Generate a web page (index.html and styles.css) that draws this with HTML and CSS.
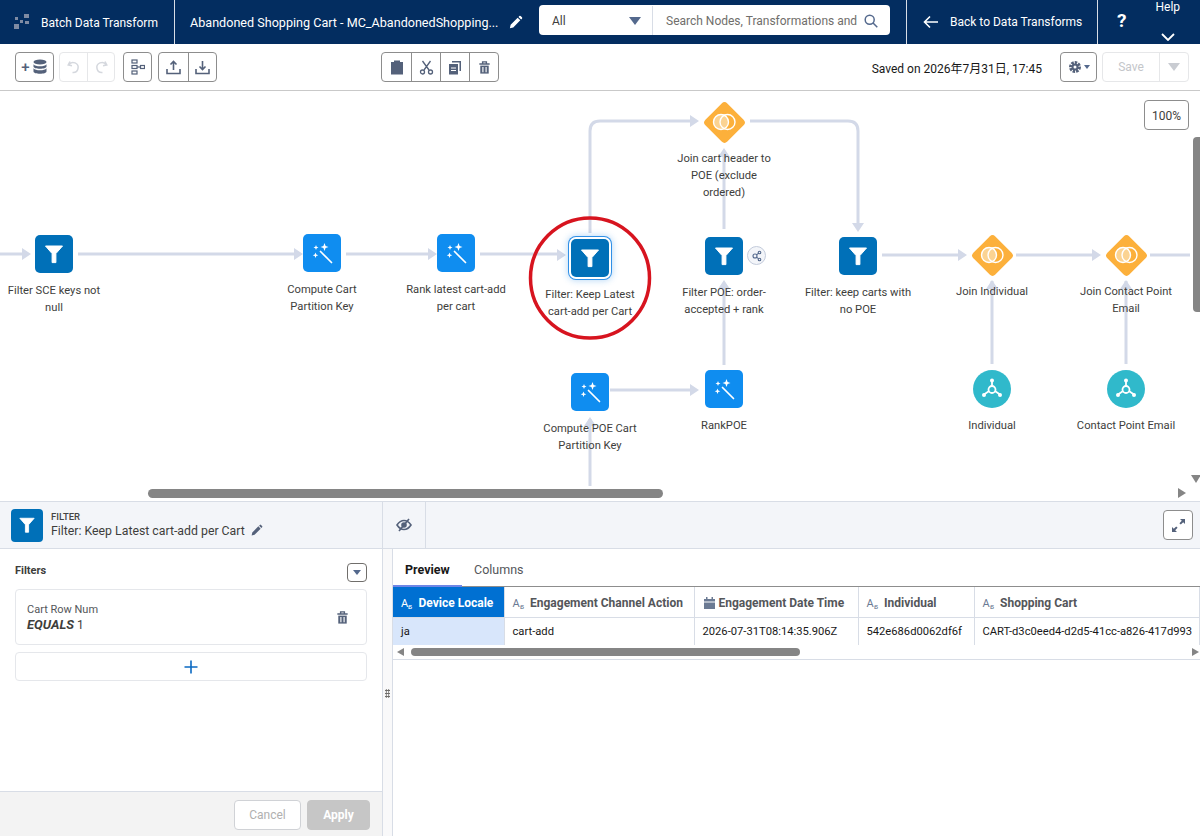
FILE: index.html
```html
<!DOCTYPE html>
<html lang="en">
<head>
  <meta charset="UTF-8">
  <title>Batch Data Transform</title>
  <link rel="stylesheet" href="styles.css">
</head>
<body>
  <svg class="defs" width="0" height="0">
    <symbol id="i-filter" viewBox="0 0 38 38">
      <path d="M10.5 11h17l-6.6 7.6v9h-3.8v-9z" fill="#fff" stroke="#fff" stroke-width="1" stroke-linejoin="round"/>
    </symbol>
    <symbol id="i-wand" viewBox="0 0 38 38">
      <path d="M17.5 17.5l11 11" stroke="#fff" stroke-width="1.700" stroke-linecap="round"/>
      <path d="M21.5 9l1.100 2.900 2.900 1.100-2.900 1.100-1.100 2.900-1.100-2.900-2.900-1.100 2.900-1.100zM13 11l.7 1.800 1.800.7-1.800.7-.7 1.800-.7-1.800-1.800-.7 1.800-.7zM12.500 18.500l.8 2 2 .8-2 .8-.8 2-.8-2-2-.8 2-.8z" fill="#fff"/>
    </symbol>
    <symbol id="i-join" viewBox="0 0 44 44">
      <circle cx="19" cy="22" r="7.500" fill="#fbe3b8" fill-opacity=".7" stroke="#fff" stroke-width="1.400"/>
      <circle cx="25.500" cy="22" r="7.500" fill="none" stroke="#fff" stroke-width="1.400"/>
    </symbol>
    <symbol id="i-hub" viewBox="0 0 38 38">
      <path d="M19 9v10M19 19l-8 5.500M19 19l8 5.500" stroke="#fff" stroke-width="1.800"/>
      <circle cx="19" cy="19.500" r="3.500" fill="#30b9cb" stroke="#fff" stroke-width="1.800"/>
      <circle cx="19" cy="10.500" r="2" fill="#fff"/>
      <circle cx="11" cy="25" r="2" fill="#fff"/>
      <circle cx="27" cy="25" r="2" fill="#fff"/>
    </symbol>
    <symbol id="i-trash" viewBox="0 0 16 16">
      <path d="M2.500 4.200h11M6 4V2h4v2" fill="none" stroke="currentColor" stroke-width="1.500"/>
      <path d="M3.500 6h9v8.500h-9z" fill="currentColor"/>
      <path d="M6.300 7.500v5.500M9.700 7.500v5.500" stroke="#fff" stroke-width="1.200"/>
    </symbol>
    <symbol id="i-pencil" viewBox="0 0 16 16">
      <path d="M2 14l.8-3.600 7.500-7.500 2.800 2.800-7.500 7.500zM11.200 2l.9-.9a1 1 0 0 1 1.400 0l1.400 1.400a1 1 0 0 1 0 1.400l-.9.9z" fill="currentColor"/>
    </symbol>
  </svg>

  <header class="topbar">
    <div class="brand">
      <svg class="brand-logo" width="16" height="16" viewBox="0 0 16 16" fill="#7f8ba3">
        <rect x="0" y="10" width="5" height="5"/><rect x="10" y="0" width="5" height="4"/>
        <rect x="1" y="3" width="3" height="3"/><rect x="6" y="6" width="3" height="3"/><rect x="11" y="7" width="4" height="3"/>
      </svg>
      <span>Batch Data Transform</span>
    </div>
    <div class="doc-title">
      <span>Abandoned Shopping Cart - MC_AbandonedShopping...</span>
      <svg width="15" height="15"><use href="#i-pencil"/></svg>
    </div>
    <div class="search-group">
      <div class="search-select"><span>All</span><i class="caret"></i></div>
      <div class="search-box">
        <span>Search Nodes, Transformations and</span>
        <svg width="14" height="14" viewBox="0 0 14 14" fill="none" stroke="#54698d" stroke-width="1.500"><circle cx="5.700" cy="5.700" r="4.500"/><path d="M9 9l4.300 4.300"/></svg>
      </div>
    </div>
    <div class="back-link">
      <svg width="16" height="14" viewBox="0 0 16 14" fill="none" stroke="#fff" stroke-width="1.600"><path d="M15 7H1.500M7 1.500L1.500 7 7 12.500"/></svg>
      <span>Back to Data Transforms</span>
    </div>
    <div class="help-cell">
      <span class="help-mark">?</span>
      <div class="help-menu">
        <span>Help</span>
        <svg width="14" height="8" viewBox="0 0 14 8" fill="none" stroke="#fff" stroke-width="1.800"><path d="M1 1l6 6 6-6"/></svg>
      </div>
    </div>
  </header>

  <div class="toolbar">
    <div class="tool-left">
      <div class="btn-group">
        <button class="tool tool-add">
          <span class="plus">+</span>
          <svg width="16" height="16" viewBox="0 0 16 16" fill="#54617a"><ellipse cx="8" cy="3" rx="6.500" ry="2.500"/><path d="M1.500 5.200c1 1.400 3.500 2 6.500 2s5.500-.6 6.500-2v2.300c0 1.300-3 2.300-6.500 2.300s-6.500-1-6.500-2.300zM1.500 9.200c1 1.400 3.500 2 6.500 2s5.500-.6 6.500-2v3.300c0 1.300-3 2.300-6.500 2.300s-6.500-1-6.500-2.300z"/></svg>
        </button>
      </div>
      <div class="btn-group off history">
        <button class="tool"><svg width="14" height="14" viewBox="0 0 14 14" fill="none" stroke="#d5d8de" stroke-width="1.500"><path d="M3 1.500L1.200 5 5 5.700M1.800 5a5 5 0 1 1 3.700 7.500"/></svg></button>
        <button class="tool"><svg width="14" height="14" viewBox="0 0 14 14" fill="none" stroke="#d5d8de" stroke-width="1.500"><path d="M11 1.500L12.800 5 9 5.700M12.200 5a5 5 0 1 0-3.700 7.500"/></svg></button>
      </div>
      <div class="btn-group tree">
        <button class="tool"><svg width="14" height="16" viewBox="0 0 14 16" fill="none" stroke="#54617a" stroke-width="1.200"><rect x="1" y="1" width="5" height="3"/><rect x="1" y="6.500" width="5" height="3"/><rect x="1" y="12" width="5" height="3"/><rect x="9.500" y="6.500" width="4" height="3"/><path d="M6 8h3.500"/></svg></button>
      </div>
      <div class="btn-group transfer">
        <button class="tool"><svg width="15" height="15" viewBox="0 0 15 15" fill="none" stroke="#54617a" stroke-width="1.600"><path d="M7.500 10V2M4.500 4.500l3-3 3 3M1 9v4.500h13V9"/></svg></button>
        <button class="tool"><svg width="15" height="15" viewBox="0 0 15 15" fill="none" stroke="#54617a" stroke-width="1.600"><path d="M7.500 1v8M4.500 6.500l3 3 3-3M1 9v4.500h13V9"/></svg></button>
      </div>
    </div>
    <div class="btn-group">
      <button class="tool"><svg width="14" height="16" viewBox="0 0 14 16" fill="#54617a"><path d="M1 3h3V1.500h6V3h3v12.500H1z"/></svg></button>
      <button class="tool"><svg width="15" height="15" viewBox="0 0 15 15" fill="none" stroke="#54617a" stroke-width="1.300"><path d="M3.500 1l6.500 9M11.500 1L5 10"/><circle cx="3.500" cy="12" r="2"/><circle cx="11.500" cy="12" r="2"/></svg></button>
      <button class="tool"><svg width="14" height="15" viewBox="0 0 14 15" fill="#54617a"><path d="M4 1h9v10h-1.500V2.500H4z"/><path d="M1 4h9v10.500H1z"/><path d="M3 8h5M3 10.500h5" stroke="#fff"/></svg></button>
      <button class="tool"><svg class="trash" width="15" height="15"><use href="#i-trash"/></svg></button>
    </div>
    <div class="tool-right">
      <span class="saved">Saved on 2026年7月31日, 17:45</span>
      <button class="tool gear">
        <svg width="14" height="14" viewBox="0 0 14 14"><circle cx="7" cy="7" r="4.500" fill="none" stroke="#54617a" stroke-width="3" stroke-dasharray="2.400 1"/><circle cx="7" cy="7" r="3.500" fill="#54617a"/><circle cx="7" cy="7" r="1.500" fill="#fff"/></svg>
        <i class="caret tiny"></i>
      </button>
      <div class="btn-group off save-group">
        <button class="tool save">Save</button>
        <button class="tool save-more"><i class="caret light"></i></button>
      </div>
    </div>
  </div>

  <main class="canvas">
    <svg class="edges" width="1200" height="410" fill="none" stroke="#d3d9e8" stroke-width="3">
      <path d="M0 163H24M78 163H296M346 163H430M480 163H559"/>
      <path d="M590 142V40Q590 30 600 30H692"/>
      <path d="M750 30H848Q858 30 858 40V134"/>
      <path d="M724 138V60M724 274V192M610 299H692M590 395V328"/>
      <path d="M882 164H960M1016 164H1094M1150 164H1190M992 273V190M1126 273V190"/>
      <g fill="#d3d9e8" stroke="none">
        <path d="M22 157l9 6-9 6zM294 157l9 6-9 6zM428 157l9 6-9 6zM557 158l9 6-9 6zM690 24l9 6-9 6zM852 132l6 9 6-9zM718 66l6-9 6 9zM718 198l6-9 6 9zM690 293l9 6-9 6zM584 335l6-9 6 9zM958 158l9 6-9 6zM1092 158l9 6-9 6zM986 198l6-9 6 9zM1120 198l6-9 6 9z"/>
      </g>
    </svg>

    <div class="node n-sce"><div class="ico filter"><svg width="38" height="38"><use href="#i-filter"/></svg></div><p>Filter SCE keys not<br>null</p></div>
    <div class="node n-compute"><div class="ico wand"><svg width="38" height="38"><use href="#i-wand"/></svg></div><p>Compute Cart<br>Partition Key</p></div>
    <div class="node n-rank"><div class="ico wand"><svg width="38" height="38"><use href="#i-wand"/></svg></div><p>Rank latest cart-add<br>per cart</p></div>
    <div class="node n-keep"><div class="ico filter selected"><svg width="38" height="38"><use href="#i-filter"/></svg></div><p>Filter: Keep Latest<br>cart-add per Cart</p></div>
    <div class="node n-fpoe"><div class="ico filter"><svg width="38" height="38"><use href="#i-filter"/></svg></div><p>Filter POE: order-<br>accepted + rank</p></div>
    <div class="node n-carts"><div class="ico filter"><svg width="38" height="38"><use href="#i-filter"/></svg></div><p>Filter: keep carts with<br>no POE</p></div>
    <div class="node n-jcart"><div class="ico join"><svg width="44" height="44"><use href="#i-join"/></svg></div><p>Join cart header to<br>POE (exclude<br>ordered)</p></div>
    <div class="node n-jind"><div class="ico join"><svg width="44" height="44"><use href="#i-join"/></svg></div><p>Join Individual</p></div>
    <div class="node n-jcon"><div class="ico join"><svg width="44" height="44"><use href="#i-join"/></svg></div><p>Join Contact Point<br>Email</p></div>
    <div class="node n-cpoe"><div class="ico wand bright"><svg width="38" height="38"><use href="#i-wand"/></svg></div><p>Compute POE Cart<br>Partition Key</p></div>
    <div class="node n-rpoe"><div class="ico wand bright"><svg width="38" height="38"><use href="#i-wand"/></svg></div><p>RankPOE</p></div>
    <div class="node n-ind"><div class="ico hub"><svg width="38" height="38"><use href="#i-hub"/></svg></div><p>Individual</p></div>
    <div class="node n-con"><div class="ico hub"><svg width="38" height="38"><use href="#i-hub"/></svg></div><p>Contact Point Email</p></div>

    <div class="badge"><svg width="12" height="12" viewBox="0 0 12 12" fill="none" stroke="#54698d" stroke-width="1.100"><circle cx="4" cy="6" r="2"/><circle cx="8.500" cy="2.500" r="1.300"/><circle cx="8.500" cy="9.500" r="1.300"/><path d="M5.500 4.700l2-1.300M5.500 7.300l2 1.300"/></svg></div>
    <svg class="ring" width="126" height="126"><ellipse cx="63" cy="63" rx="59.500" ry="60" fill="none" stroke="#d7141f" stroke-width="3.500"/></svg>
    <div class="zoom-level">100%</div>
    <div class="sb-h"></div>
    <div class="sb-v"></div>
    <i class="arrow arrow-right"></i>
    <i class="arrow arrow-down"></i>
  </main>

  <section class="panel">
    <div class="panel-head">
      <div class="head-left">
        <div class="head-ico"><svg width="32" height="32" viewBox="0 0 38 38"><use href="#i-filter"/></svg></div>
        <div>
          <div class="head-kind">FILTER</div>
          <div class="head-name">Filter: Keep Latest cart-add per Cart <svg width="13" height="13"><use href="#i-pencil"/></svg></div>
        </div>
      </div>
      <div class="head-eye">
        <svg width="16" height="14" viewBox="0 0 16 14" fill="none" stroke="#54617a" stroke-width="1.600"><path d="M1 7c2-3 4.300-4.500 7-4.500S13 4 15 7c-2 3-4.300 4.500-7 4.500S3 10 1 7z"/><circle cx="8" cy="7" r="2" fill="#54617a"/><path d="M13 1L3 13"/></svg>
      </div>
      <div class="head-rest">
        <button class="expand"><svg width="13" height="13" viewBox="0 0 13 13" fill="#54617a"><path d="M8 0h5v5l-1.800-1.800-2.400 2.400-1.400-1.400 2.400-2.400zM5 13H0V8l1.800 1.800 2.400-2.400 1.400 1.400-2.400 2.400z"/></svg></button>
      </div>
    </div>
    <div class="panel-body">
      <aside class="filters">
        <div class="filters-main">
          <div class="filters-title"><strong>Filters</strong><button class="mini"><i class="caret"></i></button></div>
          <div class="filter-card">
            <div>
              <div class="f-field">Cart Row Num</div>
              <div class="f-rule"><b>EQUALS</b> 1</div>
            </div>
            <svg class="trash" width="15" height="15"><use href="#i-trash"/></svg>
          </div>
          <div class="filter-add"><svg width="14" height="14" viewBox="0 0 14 14" stroke="#0b69c2" stroke-width="1.600"><path d="M7 .5v13M.5 7h13"/></svg></div>
        </div>
        <div class="filters-foot">
          <button class="foot-btn">Cancel</button>
          <button class="foot-btn apply">Apply</button>
        </div>
      </aside>
      <div class="splitter"><i></i></div>
      <div class="preview">
        <div class="tabs">
          <span class="tab active">Preview</span>
          <span class="tab">Columns</span>
        </div>
        <table class="grid">
          <colgroup><col class="c1"><col class="c2"><col class="c3"><col class="c4"><col class="c5"></colgroup>
          <thead>
            <tr>
              <th class="hot"><span class="ty">A<i>a</i></span> Device Locale</th>
              <th><span class="ty">A<i>a</i></span> Engagement Channel Action</th>
              <th><svg width="13" height="12" viewBox="0 0 13 12" fill="#6b7a93"><path d="M1 2h11v2.500H1zM1 5.500h11V12H1zM3 0h1.500v2H3zM8.500 0H10v2H8.500z"/></svg> Engagement Date Time</th>
              <th><span class="ty">A<i>a</i></span> Individual</th>
              <th><span class="ty">A<i>a</i></span> Shopping Cart</th>
            </tr>
          </thead>
          <tbody>
            <tr>
              <td class="hot-cell">ja</td>
              <td>cart-add</td>
              <td>2026-07-31T08:14:35.906Z</td>
              <td>542e686d0062df6f</td>
              <td>CART-d3c0eed4-d2d5-41cc-a826-417d993</td>
            </tr>
          </tbody>
        </table>
        <div class="grid-scroll">
          <i class="arrow arrow-left"></i>
          <div class="grid-thumb"></div>
          <i class="arrow arrow-right-sm"></i>
        </div>
      </div>
    </div>
  </section>
</body>
</html>
```

FILE: styles.css
```css
* {
  box-sizing: border-box;
}
html, body {
  margin: 0;
  height: 836px;
  overflow: hidden;
}
body {
  font-family: Roboto, "Noto Sans CJK JP", sans-serif;
  font-size: 12px;
  color: #3e3e3c;
  background: #fff;
}
.defs {
  position: absolute;
}
button {
  font-family: inherit;
  padding: 0;
  background: #fff;
  border: none;
}
.caret {
  display: block;
  width: 0;
  height: 0;
  border-left: 6px solid transparent;
  border-right: 6px solid transparent;
  border-top: 8px solid #54698d;
}

/* top bar */
.topbar {
  display: flex;
  height: 44px;
  background: #032d60;
  color: #fff;
}
.brand {
  display: flex;
  align-items: center;
  gap: 11px;
  width: 175px;
  padding-left: 14px;
  border-right: 1px solid #d8dde6;
}
.brand span {
  padding-top: 2px;
}
.doc-title {
  display: flex;
  align-items: center;
  gap: 10px;
  width: 364px;
  padding-left: 15px;
  font-size: 12.600px;
  white-space: nowrap;
}
.search-group {
  display: flex;
  width: 351px;
  height: 30px;
  margin-top: 5px;
  padding-top: 1px;
  background: #fff;
  border-radius: 4px;
  color: #3e3e3c;
}
.search-select {
  display: flex;
  flex: none;
  align-items: center;
  justify-content: space-between;
  width: 114px;
  padding: 0 11px 0 13px;
  border-right: 1px solid #d8dde6;
}
.search-box {
  display: flex;
  align-items: center;
  justify-content: space-between;
  flex: 1;
  min-width: 0;
  padding: 0 12px 0 13px;
  color: #706e6b;
  white-space: nowrap;
}
.back-link {
  display: flex;
  align-items: center;
  gap: 11px;
  width: 192px;
  margin-left: 16px;
  padding-left: 16px;
  border-left: 1px solid #d8dde6;
  border-right: 1px solid #d8dde6;
}
.help-cell {
  display: flex;
  flex: 1;
  padding-left: 19px;
}
.help-mark {
  margin-top: 9px;
  font-size: 19px;
  font-weight: 700;
}
.help-menu {
  display: flex;
  flex-direction: column;
  align-items: center;
  gap: 19px;
  margin-left: 29px;
}

/* toolbar */
.toolbar {
  display: flex;
  align-items: center;
  height: 47px;
  padding: 0 11px 0 15px;
  border-bottom: 1px solid #c9c9c9;
}
.tool-left {
  display: flex;
  gap: 5px;
  width: 366px;
}
.btn-group {
  display: flex;
  height: 30px;
  border: 1px solid #8d8d8d;
  border-radius: 4px;
}
.btn-group.off {
  border-color: #e6e7e9;
}
.tool {
  display: flex;
  align-items: center;
  justify-content: center;
  width: 29px;
  height: 100%;
  border-left: 1px solid #8d8d8d;
  background: transparent;
}
.tool:first-child {
  border-left: none;
}
.off .tool {
  border-color: #e6e7e9;
}
.tool-add {
  width: 37px;
  gap: 2px;
}
.history .tool, .tree .tool {
  width: 27px;
}
.tree {
  margin-left: 3px;
}
.transfer {
  margin-left: 1px;
}
.transfer .tool {
  width: 28.500px;
}
.plus {
  color: #54617a;
  font-size: 15px;
  font-weight: 500;
  line-height: 1;
}
.trash {
  color: #54617a;
}
.tool-right {
  display: flex;
  align-items: center;
  margin-left: auto;
}
.saved {
  margin-right: 18px;
  color: #181818;
}
.tool.gear {
  width: 37px;
  height: 30px;
  gap: 2px;
  border: 1px solid #8d8d8d;
  border-radius: 4px;
}
.caret.tiny {
  border-left-width: 3px;
  border-right-width: 3px;
  border-top-width: 4px;
}
.caret.light {
  border-top-color: #c9ccd2;
}
.save-group {
  margin-left: 5px;
}
.tool.save {
  width: 56px;
  font-size: 12px;
  color: #c4c6ca;
}
.tool.save-more {
  width: 29px;
}

/* canvas */
.canvas {
  position: relative;
  height: 410px;
  overflow: hidden;
}
.edges {
  position: absolute;
  left: 0;
  top: 0;
}
.node {
  position: absolute;
  display: flex;
  flex-direction: column;
  align-items: center;
  width: 140px;
  text-align: center;
}
.node p {
  margin: 9px 0 0;
  font-size: 11.200px;
  line-height: 17px;
  color: #3e3e3c;
  white-space: nowrap;
}
.ico {
  display: flex;
  align-items: center;
  justify-content: center;
  width: 38px;
  height: 38px;
  border-radius: 5px;
}
.ico svg {
  display: block;
  flex: none;
}
.ico.filter {
  background: #0070b8;
}
.ico.wand {
  background: #0f8df0;
}
.ico.hub {
  background: #30b9cb;
  border-radius: 50%;
}
.ico.join {
  position: relative;
  width: 44px;
  height: 44px;
  background: none;
}
.ico.join::before {
  content: "";
  position: absolute;
  left: 6.500px;
  top: 6.500px;
  width: 31px;
  height: 31px;
  background: #fcb03b;
  border-radius: 4px;
  transform: rotate(45deg);
}
.ico.join svg {
  position: relative;
}
.node .join + p {
  margin-top: 6px;
}
.ico.selected {
  box-shadow: 0 0 0 2px #fff, 0 0 0 3px #2f8fe6, 0 0 6px 4px rgba(47, 143, 230, .3);
}
.n-sce { left: -16px; top: 144px; }
.n-compute { left: 252px; top: 143px; }
.n-rank { left: 386px; top: 143px; }
.n-keep { left: 520px; top: 148px; }
.n-fpoe { left: 654px; top: 146px; }
.n-carts { left: 788px; top: 146px; }
.n-jcart { left: 654px; top: 9px; }
.n-jind { left: 922px; top: 142px; }
.n-jcon { left: 1056px; top: 142px; }
.n-cpoe { left: 520px; top: 282px; }
.n-rpoe { left: 654px; top: 279px; }
.n-ind { left: 922px; top: 279px; }
.n-con { left: 1056px; top: 279px; }
.badge {
  position: absolute;
  left: 747px;
  top: 155px;
  display: flex;
  align-items: center;
  justify-content: center;
  width: 19px;
  height: 19px;
  background: #f3f5f9;
  border: 1px solid #c3cbdb;
  border-radius: 50%;
}
.ring {
  position: absolute;
  left: 527px;
  top: 124px;
}
.zoom-level {
  position: absolute;
  right: 11px;
  top: 9px;
  width: 45px;
  height: 30px;
  line-height: 31px;
  text-align: center;
  background: #fff;
  border: 1px solid #8d8d8d;
  border-radius: 4px;
}
.sb-h {
  position: absolute;
  left: 148px;
  top: 398px;
  width: 515px;
  height: 9px;
  background: #858585;
  border-radius: 5px;
}
.sb-v {
  position: absolute;
  right: 0;
  top: 46px;
  width: 7px;
  height: 175px;
  background: #858585;
  border-radius: 4px 0 0 4px;
}
.arrow {
  display: block;
  width: 0;
  height: 0;
}
.canvas .arrow {
  position: absolute;
}
.arrow-right {
  left: 1178px;
  top: 397px;
  border-top: 5px solid transparent;
  border-bottom: 5px solid transparent;
  border-left: 8px solid #858585;
}
.arrow-down {
  left: 1191px;
  top: 384px;
  border-left: 5px solid transparent;
  border-right: 5px solid transparent;
  border-top: 8px solid #858585;
}

/* bottom panel */
.panel {
  border-top: 1px solid #d8dde6;
}
.panel-head {
  display: flex;
  height: 47px;
  background: #f3f5f9;
  border-bottom: 1px solid #d8dde6;
}
.head-left {
  display: flex;
  align-items: center;
  gap: 8px;
  width: 383px;
  padding-left: 11px;
  border-right: 1px solid #d8dde6;
}
.head-ico {
  width: 32px;
  height: 33px;
  background: #0070b8;
  border-radius: 4px;
}
.head-kind {
  font-size: 9.500px;
  font-weight: 500;
  line-height: 12px;
  color: #444;
}
.head-name {
  font-size: 12.300px;
  line-height: 16px;
}
.head-name svg {
  color: #54617a;
  vertical-align: -2px;
  margin-left: 2px;
}
.head-eye {
  display: flex;
  align-items: center;
  justify-content: center;
  width: 43px;
  border-right: 1px solid #d8dde6;
}
.head-rest {
  display: flex;
  align-items: center;
  justify-content: flex-end;
  flex: 1;
  padding-right: 7px;
}
.expand {
  display: flex;
  align-items: center;
  justify-content: center;
  width: 30px;
  height: 30px;
  border: 1px solid #8d8d8d;
  border-radius: 4px;
}
.panel-body {
  display: flex;
  height: 288px;
}
.filters {
  display: flex;
  flex-direction: column;
  width: 383px;
  border-right: 1px solid #d8dde6;
}
.filters-main {
  flex: 1;
  padding: 13px 15px 0;
}
.filters-title {
  display: flex;
  align-items: center;
  justify-content: space-between;
  height: 20px;
  margin-bottom: 7px;
  font-size: 11px;
}
.filters-title strong {
  margin-bottom: 3px;
  font-weight: 700;
}
.mini {
  display: flex;
  align-items: center;
  justify-content: center;
  width: 20px;
  height: 19px;
  border: 1px solid #706e6b;
  border-radius: 4px;
}
.mini .caret {
  border-left-width: 4px;
  border-right-width: 4px;
  border-top-width: 5px;
}
.filter-card {
  display: flex;
  align-items: center;
  justify-content: space-between;
  height: 56px;
  padding: 0 16px 0 11px;
  border: 1px solid #e5e7eb;
  border-radius: 4px;
}
.f-field {
  font-size: 11px;
  line-height: 15px;
  color: #54565a;
}
.f-rule {
  line-height: 16px;
}
.f-rule b {
  font-size: 13px;
  font-style: italic;
}
.filter-add {
  display: flex;
  align-items: center;
  justify-content: center;
  height: 29px;
  margin-top: 7px;
  border: 1px solid #e5e7eb;
  border-radius: 4px;
}
.filters-foot {
  display: flex;
  justify-content: flex-end;
  gap: 6px;
  height: 46px;
  padding: 8px 12px 0;
  background: #f3f3f3;
  border-top: 1px solid #d8dde6;
}
.foot-btn {
  width: 67px;
  height: 30px;
  font-size: 12px;
  color: #b0b0b0;
  border: 1px solid #d0d2d6;
  border-radius: 4px;
}
.foot-btn.apply {
  width: 63px;
  color: #fff;
  font-weight: 700;
  background: #c6c6c6;
  border-color: #c6c6c6;
}
.splitter {
  position: relative;
  width: 10px;
  background: #f9f9fa;
  border-right: 1px solid #d8dde6;
}
.splitter i {
  position: absolute;
  left: 2px;
  top: 140px;
  width: 5px;
  height: 9px;
  background: radial-gradient(circle, #706e6b 1px, transparent 1.200px) 0 0 / 2.500px 3px;
}
.preview {
  flex: 1;
  min-width: 0;
  overflow: hidden;
}
.tabs {
  display: flex;
  height: 38px;
  border-bottom: 1px solid #8d8d8d;
}
.tab {
  padding: 13px 12px 0;
  font-size: 12.500px;
  color: #54565a;
}
.tab.active {
  width: 69px;
  color: #181818;
  font-weight: 700;
  border-bottom: 2px solid #6f86e6;
  height: 38px;
}
.grid {
  width: 806px;
  table-layout: fixed;
  border-collapse: collapse;
}
.c1 { width: 111px; }
.c2 { width: 190px; }
.c3 { width: 164px; }
.c4 { width: 116px; }
.c5 { width: 225px; }
.grid th, .grid td {
  padding: 0 8px;
  white-space: nowrap;
  overflow: hidden;
  text-align: left;
  border-right: 1px solid #d8dde6;
}
.grid th {
  height: 30px;
  padding-top: 2px;
  font-size: 12px;
  font-weight: 700;
  color: #54565a;
  border-bottom: 1px solid #d8dde6;
}
.grid th svg {
  vertical-align: -2px;
}
.ty {
  display: inline-block;
  margin-right: 3px;
  font-size: 11px;
  font-weight: 400;
  color: #6b7a93;
}
.ty i {
  display: inline-block;
  font-size: 8px;
  font-style: normal;
  transform: translateY(2px) scaleX(-1);
}
.grid td {
  height: 28px;
  padding-top: 1px;
  font-size: 11.200px;
  color: #181818;
}
.grid th.hot {
  color: #fff;
  background: #0070d2;
}
.grid th.hot .ty {
  color: #fff;
}
.grid td.hot-cell {
  background: #d8e6fb;
}
.grid-scroll {
  display: flex;
  align-items: center;
  height: 15px;
  padding-left: 4px;
  border-bottom: 1px solid #d8dde6;
}
.arrow-left {
  border-top: 4px solid transparent;
  border-bottom: 4px solid transparent;
  border-right: 7px solid #858585;
}
.grid-thumb {
  width: 389px;
  height: 8px;
  margin-left: 7px;
  background: #858585;
  border-radius: 4px;
}
.arrow-right-sm {
  margin-left: auto;
  margin-right: 1px;
  border-top: 4px solid transparent;
  border-bottom: 4px solid transparent;
  border-left: 7px solid #858585;
}
```
